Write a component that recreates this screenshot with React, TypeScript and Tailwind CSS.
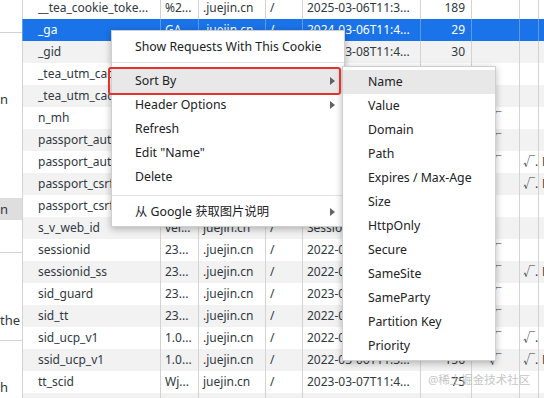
import React from "react";

type Row = {
  name: string;
  value: string;
  domain: string;
  path: string;
  expires: string;
  size: string;
  httpOnly?: boolean;
  secure?: boolean;
  sameSite?: string;
  selected?: boolean;
};

const rows: Row[] = [
  { name: "__tea_cookie_toke...", value: "%2...", domain: ".juejin.cn", path: "/", expires: "2025-03-06T11:3...", size: "189" },
  { name: "_ga", value: "GA...", domain: ".juejin.cn", path: "/", expires: "2024-03-06T11:4...", size: "29", selected: true },
  { name: "_gid", value: "GA...", domain: ".juejin.cn", path: "/", expires: "2024-03-08T11:4...", size: "30" },
  { name: "_tea_utm_cache_2608", value: "{%...", domain: ".juejin.cn", path: "/", expires: "2023-03-13T11:4...", size: "110" },
  { name: "_tea_utm_cache_2018", value: "{%...", domain: ".juejin.cn", path: "/", expires: "2023-03-13T11:4...", size: "110" },
  { name: "n_mh", value: "9-...", domain: ".juejin.cn", path: "/", expires: "2022-09-02T11:3...", size: "47", httpOnly: true },
  { name: "passport_auth_status", value: "bd...", domain: ".juejin.cn", path: "/", expires: "2022-04-05T11:3...", size: "84", httpOnly: true },
  { name: "passport_auth_status_ss", value: "bd...", domain: ".juejin.cn", path: "/", expires: "2022-04-05T11:3...", size: "87", httpOnly: true, secure: true, sameSite: "None" },
  { name: "passport_csrf_token", value: "7a...", domain: ".juejin.cn", path: "/", expires: "2022-05-05T11:3...", size: "51", secure: true, sameSite: "None" },
  { name: "passport_csrf_token_default", value: "7a...", domain: ".juejin.cn", path: "/", expires: "2022-05-05T11:3...", size: "59" },
  { name: "s_v_web_id", value: "ver...", domain: "juejin.cn", path: "/", expires: "Session", size: "60" },
  { name: "sessionid", value: "23...", domain: ".juejin.cn", path: "/", expires: "2022-03-06T11:3...", size: "41", httpOnly: true },
  { name: "sessionid_ss", value: "23...", domain: ".juejin.cn", path: "/", expires: "2022-03-06T11:3...", size: "44", httpOnly: true, secure: true, sameSite: "None" },
  { name: "sid_guard", value: "23...", domain: ".juejin.cn", path: "/", expires: "2023-03-01T11:3...", size: "82", httpOnly: true },
  { name: "sid_tt", value: "23...", domain: ".juejin.cn", path: "/", expires: "2022-03-06T11:3...", size: "38", httpOnly: true },
  { name: "sid_ucp_v1", value: "1.0...", domain: ".juejin.cn", path: "/", expires: "2022-03-06T11:3...", size: "153", httpOnly: true, secure: true },
  { name: "ssid_ucp_v1", value: "1.0...", domain: ".juejin.cn", path: "/", expires: "2022-03-06T11:3...", size: "156", httpOnly: true, secure: true, sameSite: "None" },
  { name: "tt_scid", value: "Wj...", domain: "juejin.cn", path: "/", expires: "2023-03-07T11:4...", size: "75" },
  { name: "ttcid", value: "a8...", domain: ".juejin.cn", path: "/", expires: "2023-03-07T11:4...", size: "37" },
];

const sortFields = [
  "Name",
  "Value",
  "Domain",
  "Path",
  "Expires / Max-Age",
  "Size",
  "HttpOnly",
  "Secure",
  "SameSite",
  "SameParty",
  "Partition Key",
  "Priority",
];

const Arrow = () => (
  <svg width="5" height="8" viewBox="0 0 5 8" className="absolute right-[9px] top-[8px]">
    <polygon points="0,0 5,4 0,8" fill="#5f6368" />
  </svg>
);

const CookieRow = ({ row, index }: { row: Row; index: number }) => {
  const bg = row.selected ? "bg-[#1a73e8] text-white" : index % 2 === 0 && index > 0 ? "bg-[#f2f2f2]" : "bg-white";
  const line = row.selected ? "border-[#5d9bf0]" : "border-[#d3d3d3]";
  return (
    <div className={`grid grid-cols-[138px_38px_67px_37px_118px_51px_48px_19px_1fr] h-[22px] leading-[22px] ${bg}`}>
      <div className={`border-l ${line} pl-[15px] overflow-hidden whitespace-nowrap`}>{row.name}</div>
      <div className={`border-l ${line} pl-[4px] overflow-hidden whitespace-nowrap`}>{row.value}</div>
      <div className={`border-l ${line} pl-[4px] overflow-hidden whitespace-nowrap`}>{row.domain}</div>
      <div className={`border-l ${line} pl-[4px] overflow-hidden whitespace-nowrap`}>{row.path}</div>
      <div className={`border-l ${line} pl-[4px] overflow-hidden whitespace-nowrap`}>{row.expires}</div>
      <div className={`border-l ${line} pr-[6px] text-right overflow-hidden whitespace-nowrap`}>{row.size}</div>
      <div className={`border-l ${line} text-center overflow-hidden whitespace-nowrap`}>{row.httpOnly ? "√" : ""}</div>
      <div className={`border-l ${line} pl-[3px] overflow-hidden whitespace-nowrap`}>{row.secure ? "√." : ""}</div>
      <div className={`border-l ${line} pl-[3px] overflow-hidden whitespace-nowrap`}>{row.sameSite ?? ""}</div>
    </div>
  );
};

export default function App() {
  return (
    <div className="relative w-[544px] h-[398px] overflow-hidden bg-white text-[12px] text-[#303942] font-['Noto_Sans','Noto_Sans_CJK_SC',sans-serif]">
      <div className="flex h-full">
        {/* Left tree (clipped) */}
        <div className="w-[22px] shrink-0 flex flex-col text-[13px] text-[#303942] overflow-hidden whitespace-nowrap">
          <div className="h-[33px] border-b border-[#d3d3d3]" />
          <div className="h-[56px]" />
          <div className="h-[22px] leading-[22px]">n</div>
          <div className="h-[89px]" />
          <div className="h-[22px] leading-[22px] bg-[#dedede]">n</div>
          <div className="h-[34px] border-b border-[#d3d3d3]" />
          <div className="h-[56px]" />
          <div className="h-[22px] leading-[22px]">the</div>
          <div className="h-[11px] border-b border-[#d3d3d3]" />
          <div className="h-[35px]" />
          <div className="h-[22px] leading-[22px]">h</div>
        </div>

        {/* Cookie table */}
        <div className="flex-1 -mt-[3px] flex flex-col">
          {rows.map((row, i) => (
            <CookieRow key={row.name} row={row} index={i} />
          ))}
        </div>
      </div>

      {/* Context menu */}
      <div className="absolute left-[111px] top-[30px] w-[234px] bg-white border border-[#cfcfcf] shadow-[0_2px_7px_rgba(0,0,0,0.28)] pt-[4px] pb-[2px] text-[12.3px] text-[#202124]">
        <div className="relative h-[24px] leading-[24px] pl-[23px]">Show Requests With This Cookie</div>
        <div className="mt-[3px] mb-[6px] border-t border-[#e3e3e3]" />
        <div className="relative h-[24px] leading-[24px] pl-[23px] bg-[#e8e8e8]">
          Sort By
          <Arrow />
        </div>
        <div className="relative h-[24px] leading-[24px] pl-[23px]">
          Header Options
          <Arrow />
        </div>
        <div className="relative h-[24px] leading-[24px] pl-[23px]">Refresh</div>
        <div className="relative h-[24px] leading-[24px] pl-[23px]">Edit "Name"</div>
        <div className="relative h-[24px] leading-[24px] pl-[23px]">Delete</div>
        <div className="mt-[6px] mb-[4px] border-t border-[#e3e3e3]" />
        <div className="relative h-[24px] leading-[24px] pl-[23px]">
          从 Google 获取图片说明
          <Arrow />
        </div>
      </div>

      {/* Sort By submenu */}
      <div className="absolute left-[342px] top-[66px] w-[154px] bg-white border border-[#cfcfcf] shadow-[0_2px_7px_rgba(0,0,0,0.28)] pt-[3px] pb-[2px] text-[12.3px] text-[#202124]">
        {sortFields.map((f, i) => (
          <div key={f} className={`h-[24px] leading-[24px] pl-[25px] ${i === 0 ? "bg-[#e8e8e8]" : ""}`}>
            {f}
          </div>
        ))}
      </div>

      {/* Annotation box */}
      <div className="absolute left-[108px] top-[67px] w-[233px] h-[28px] border-2 border-[#e5322d] rounded-[3px]" />

      {/* Watermark */}
      <div className="absolute left-[428px] top-[371px] text-[11.5px] text-[#b8b8b8] opacity-80 whitespace-nowrap">
        @稀土掘金技术社区
      </div>
    </div>
  );
}
